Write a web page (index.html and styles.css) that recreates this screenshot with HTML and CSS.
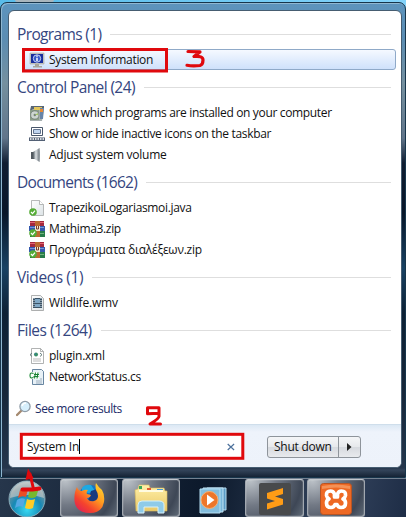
FILE: index.html
```html
<!DOCTYPE html>
<html lang="en">
<head>
<meta charset="utf-8">
<title>Start menu search</title>
<link rel="stylesheet" href="styles.css">
</head>
<body>
<svg width="0" height="0" class="defs">
  <defs>
    <linearGradient id="page" x2="1" y2="1"><stop stop-color="#fff"/><stop offset="1" stop-color="#dce3e6"/></linearGradient>
    <linearGradient id="metal" x2="1"><stop stop-color="#4f5960"/><stop offset=".45" stop-color="#dce1e4"/><stop offset="1" stop-color="#6c757c"/></linearGradient>
    <radialGradient id="orb" cx=".5" cy=".8" r=".8"><stop stop-color="#38d9f2"/><stop offset=".5" stop-color="#1789b5"/><stop offset=".78" stop-color="#69909f"/><stop offset="1" stop-color="#b9cbd1"/></radialGradient>
    <linearGradient id="fox" x1="1" x2=".2" y2="1"><stop stop-color="#ffe333"/><stop offset=".45" stop-color="#ff9820"/><stop offset=".75" stop-color="#f5432d"/><stop offset="1" stop-color="#df2255"/></linearGradient>
    <linearGradient id="folder" y2="1" x2="0"><stop stop-color="#fff0a8"/><stop offset="1" stop-color="#eac967"/></linearGradient>
    <symbol id="check" viewBox="0 0 8 8"><circle cx="4" cy="4" r="3.8" fill="#55ac36"/><path d="M2 4l1.5 1.6L6 2.6" fill="none" stroke="#fff" stroke-width="1.2"/></symbol>
    <symbol id="rar" viewBox="0 0 16 16">
      <path d="M1 0h14v5H1z" fill="#a3283e"/><path d="M1 1h14v1H1z" fill="#e36773"/>
      <path d="M0 5h16v5H0z" fill="#3458ae"/><path d="M1 6h14v1H1z" fill="#7896d5"/>
      <path d="M1 10h15v6H1z" fill="#287c49"/><path d="M1 12h14v1H1z" fill="#70b47d"/>
      <path d="M6 0h5v16H6z" fill="#bb6a30"/><path d="M6 5h5v5H6z" fill="#f5e7d0"/><path d="M7.5 5v3h2V5" fill="none" stroke="#743c2e"/>
      <use href="#check" x="0" y="8" width="8" height="8"/>
    </symbol>
  </defs>
</svg>
<div class="desktop">
  <div class="tab"></div>
  <div class="frame">
    <main class="menu">
      <div class="results">
        <h2 class="h-programs">Programs (1)</h2>
        <div class="row selected">
          <svg class="icon" viewBox="0 0 16 16"><path d="M1 1h14v11H1z" fill="#c9c9c3" stroke="#a6a59d" stroke-width=".6"/><path d="M2 2h12v9H2z" fill="#182d9e"/><circle cx="8" cy="6.5" r="3.7" fill="#3759ca" stroke="#e7efff" stroke-width=".8"/><path d="M8 5.8v3.3M8 3.5v1.3" stroke="#fff" stroke-width="1.5"/><path d="M6 12h4v2h3v1.5H4V14h2z" fill="#a8a69c"/></svg>
          <span class="name tight">System Information</span>
        </div>
        <h2 class="h-control">Control Panel (24)</h2>
        <div class="row">
          <svg class="icon" viewBox="0 0 16 16"><path d="M3 1h12v3l-2 12H1V5z" fill="#a7b0b0"/><path d="M2 1h13v3H4L1 6z" fill="#586575"/><path d="M5 2h8v3H5z" fill="#e3c65b"/><path d="M11 3h4l-1 11h-3z" fill="#6784a8"/><path d="M11 4h3v3h-3z" fill="#e98a32"/><path d="M1 5h9v10H1z" fill="#8c9d88"/><circle cx="5.8" cy="10" r="4.1" fill="#ced6d1" stroke="#65716c" stroke-width=".6"/><circle cx="5.8" cy="10" r="1.2" fill="#758476"/><path d="M6 10l3-2v2z" fill="#a1c65e"/></svg>
          <span class="name tight">Show which programs are installed on your computer</span>
        </div>
        <div class="row">
          <svg class="icon" viewBox="0 0 16 16"><path d="M2.5 1.5h11v8h-11z" fill="#fff" stroke="#48566a"/><path d="M4.5 3.5h7v4h-7z" fill="#c0d5f0" stroke="#647590"/><path d="M0 11h16v4H0z" fill="#536075"/><path d="M1 13h14" stroke="#fff" stroke-width="1.5" stroke-dasharray="1.5 1"/><path d="M0 11.5h16" stroke="#a0a7b2"/></svg>
          <span class="name taskbar-text">Show or hide inactive icons on the taskbar</span>
        </div>
        <div class="row">
          <svg class="icon" viewBox="0 0 16 16"><path d="M2 5h4v7H2z" fill="#525960"/><path d="M4 5l6.500-4v14L4 11z" fill="url(#metal)"/><path d="M10 1q2 7 0 14" fill="#8e979d"/></svg>
          <span class="name">Adjust system volume</span>
        </div>
        <h2 class="h-documents">Documents (1662)</h2>
        <div class="row">
          <svg class="icon" viewBox="0 0 16 16"><path d="M2.5.5h8l4 4v11h-12z" fill="url(#page)" stroke="#a5a7a7" stroke-width=".8"/><path d="M10.5.5v4h4" fill="#fff" stroke="#a5a7a7" stroke-width=".8"/><use href="#check" y="8" width="8" height="8"/></svg>
          <span class="name tight">TrapezikoiLogariasmoi.java</span>
        </div>
        <div class="row"><svg class="icon"><use href="#rar"/></svg><span class="name tight">Mathima3.zip</span></div>
        <div class="row"><svg class="icon"><use href="#rar"/></svg><span class="name greek">Προγράμματα διαλέξεων.zip</span></div>
        <h2 class="h-videos">Videos (1)</h2>
        <div class="row">
          <svg class="icon" viewBox="0 0 16 16"><path d="M2.5.5h9l3 3v12h-12z" fill="url(#page)" stroke="#9a9c9c" stroke-width=".8"/><path d="M4 3h9v10H4z" fill="#3c5366"/><path d="M6 4h5v4H6zM6 9h5v3H6z" fill="#80a8c5"/><path d="M5 3v10M12 3v10" stroke="#d3e0e6" stroke-dasharray="1 1"/></svg>
          <span class="name loose">Wildlife.wmv</span>
        </div>
        <h2 class="h-files">Files (1264)</h2>
        <div class="row">
          <svg class="icon" viewBox="0 0 16 16"><path d="M2.5.5h9l3 3v12h-12z" fill="#fff" stroke="#9d9f9f" stroke-width=".8"/><path d="M11.5.5v3h3" fill="none" stroke="#9d9f9f" stroke-width=".8"/><path d="M3 5L1 6.7 3 8.5M11 5l2 1.7-2 1.8" fill="none" stroke="#657d7d"/><circle cx="7" cy="6.5" r="2" fill="#388f67"/><path d="M6 5.5h1v1H6z" fill="#356fbd"/><path d="M4 11h8M4 13h8" stroke="#bbb"/></svg>
          <span class="name">plugin.xml</span>
        </div>
        <div class="row">
          <svg class="icon" viewBox="0 0 16 16"><path d="M3.5.5h9l2 2v13h-11z" fill="#e8f1f7" stroke="#587896" stroke-width=".9"/><path d="M7 12h6M7 14h6M11 10h2" stroke="#9daebd"/><path d="M0 3h10v7H0z" fill="#f8fff8"/><path d="M4.5 4.5Q1 3 1 6.5t3.5 2M6.5 3.5l-1 6M9 3.5l-1 6M5 5.5h5M4.5 7.5h5" fill="none" stroke="#168133" stroke-width="1.1"/></svg>
          <span class="name tight">NetworkStatus.cs</span>
        </div>
        <div class="more">
          <svg width="16" height="18" viewBox="0 0 16 18"><path d="M6 10L1 15" stroke="#a58a70" stroke-width="2.4" stroke-linecap="round"/><circle cx="9" cy="6.5" r="5.1" fill="#d6effc" stroke="#8f9ba6" stroke-width="1.3"/><path d="M6 6q1-3 4-3" stroke="#fff" stroke-width="1.5" fill="none"/></svg>
          <span class="name more-text">See more results</span>
        </div>
      </div>
      <footer class="footer">
        <div class="search"><span class="name">System In</span><i class="caret"></i><svg class="clear" width="8" height="8" viewBox="0 0 8 8"><path d="M.7 1l6.4 6M7.1 1L.7 7" stroke="#4d719c" stroke-width="1.2"/></svg></div>
        <div class="shutdown"><span class="label name">Shut down</span><span class="arrow"><svg width="5" height="8" viewBox="0 0 5 8"><path d="M0 0l4.5 4L0 8z" fill="#222"/></svg></span></div>
      </footer>
    </main>
  </div>
  <nav class="taskbar">
    <div class="start"><svg width="40" height="37" viewBox="0 0 40 37"><circle cx="19" cy="19" r="18" fill="url(#orb)" stroke="#a0bdc6" stroke-width=".8"/><path d="M2 18a17 16 0 0 1 34 0q-16-6-34 0z" fill="#dbd5d0" opacity=".55"/><path d="M12 10q4-3 8-1l-2 8q-4-2-8 1z" fill="#e94e25"/><path d="M22 9q4 2 9-1l-3 9q-4 2-8 0z" fill="#77b92f"/><path d="M9 20q4-3 8-1l-2 8q-4-2-8 1z" fill="#54a8e4"/><path d="M19 19q4 2 8 0l-2 9q-4 2-8 0z" fill="#ffcc26"/></svg></div>
    <div class="task b1"><svg width="31" height="31" viewBox="0 0 31 31"><circle cx="16" cy="13" r="11" fill="#1674c5"/><path d="M8 5q3-4 9-3l4 6-6 2-7-1z" fill="#1ea9e3"/><path d="M17 8l6-2 2 8-4 5-7-1z" fill="#163b80"/><path d="M3 4q1 4 5 4 3-2 6-1-2 2-1 4l4 1q-1 3-4 3 2 4 7 3 4-1 4-5 0-3-2-6-1-4 0-7 3 5 6 7 3 5 2 12-2 11-14 11Q2 30 .5 18 0 9 3 4z" fill="url(#fox)"/></svg></div>
    <div class="task b2"><svg width="34" height="31" viewBox="0 0 34 31"><path d="M1 6l3-1 1-4h10l1 3h14l1 3h2v20H2z" fill="url(#folder)" stroke="#d7b95b" stroke-width=".6"/><path d="M5 2h3v3H5z" fill="#38a95c"/><path d="M13 4h4v3h-4z" fill="#e35a32"/><path d="M23 5h6v2h-6z" fill="#479bd8"/><path d="M5 6h24v2H5z" fill="#fffbe0"/><path d="M4 29V21q0-4 4-4h17q5 0 5 4v8h-6v-6H10v6z" fill="#8fcbe9" stroke="#d6f1fb"/></svg></div>
    <div class="task plain"><svg width="28" height="27" viewBox="0 0 28 27"><path d="M8 1h19v22H8z" fill="#5b9bc5" stroke="#b6dcf0"/><path d="M4 1h20v24H4z" fill="#77b5d9" stroke="#c3e4f4"/><path d="M1 2h20v24H1z" fill="#83bddd" stroke="#b6dff2"/><circle cx="10.5" cy="13" r="8.5" fill="#ed762a" stroke="#f5b073"/><path d="M8 7.5l7.5 5.5L8 18.5z" fill="#fff"/></svg></div>
    <div class="task b3"><svg width="32" height="32" viewBox="0 0 32 32"><rect width="32" height="32" rx="2" fill="#484a4c"/><path d="M24 5v6l-8 2.500 8 2.500v5.500L8 26.500v-6l8-2.500-8-2.500V10z" fill="#ff9c16"/></svg></div>
    <div class="task b4"><svg width="32" height="32" viewBox="0 0 32 32"><rect x=".5" y=".5" width="31" height="31" rx="3" fill="#ee6924" stroke="#b75424"/><path d="M2 3q14-3 28 0v3Q16 3 2 6z" fill="#f7a26c" opacity=".7"/><path d="M10.500 8Q6 8 6.500 12.500 7 15 9 16 6.500 17 6.500 20 6.500 24.500 11 24.500q3 0 4-3h2q1 3 4 3 4.500 0 4.500-4.500 0-3-2.500-4 2-1 2.500-3.500Q26 8 21.500 8 18.500 8 17.500 11v3h-3v-3Q13.500 8 10.500 8z" fill="none" stroke="#fff" stroke-width="3.700" stroke-linejoin="round"/></svg></div>
  </nav>
  <svg class="marks" viewBox="0 0 406 517"><g fill="none" stroke="#e0090d" stroke-linecap="round" stroke-linejoin="round"><rect x="23.5" y="49.5" width="143" height="21.5" stroke-width="3" stroke-linejoin="miter"/><rect x="21.3" y="434.3" width="221.5" height="24" stroke-width="3" stroke-linejoin="miter"/><path d="M188 51.5l12 .4-6 4.6q9-1 9 3.5t-3 5.5q-7 1-13-.2" stroke-width="3.2"/><path d="M159 414v-6.300h-11.500v6l11.500-.4v3.200q0 2-9 7.500h10.500" stroke-width="3"/><path d="M30 474l3.500 15" stroke-width="3"/><path d="M22.500 489.5h10l7-1" stroke-width="4"/></g><path d="M28 468.500l5.500 9.500-8 2z" fill="#e0090d"/></svg>
</div>
</body>
</html>
```
FILE: styles.css
```css
* { box-sizing: border-box; }
body { margin: 0; font: 12px/21px "Open Sans", "Noto Sans", sans-serif; color: #111; overflow: hidden; }
.defs { position: absolute; }
.desktop { position: relative; width: 406px; height: 517px; display: flex; flex-direction: column; padding-top: 2px; overflow: hidden; background: linear-gradient(90deg, #59bce9, #83d3fa); }
.tab { position: absolute; left: 15px; top: 0; width: 39px; height: 2px; background: #a9b6bd; border-radius: 0 0 3px 3px; }
.frame { height: 476px; padding: 7px 2px 0 7px; border: 1px solid #17354b; border-radius: 7px 7px 0 0; box-shadow: inset 1px 1px #8fb7d1; background: linear-gradient(#5d94bd 0, #5b8db3 35px, #75909f 80px, #61758a 135px, #101d31 160px, #081629 210px, #194263 265px, #0d2135 310px, #17273a 390px, #25364c 465px, #33445a 467px, #152335 474px); }
.menu { width: 394px; height: 458px; border: 1px solid #465d71; border-radius: 6px; background: #fff; overflow: hidden; display: flex; flex-direction: column; }
.results { flex: none; height: 413px; padding: 6px 6px 0 8px; }
h2 { display: flex; align-items: center; gap: 9px; margin: 0; height: 32px; padding: 2px 4px 0 0; font-size: 15.5px; line-height: 30px; font-weight: 400; color: #35467f; white-space: nowrap; }
h2::after { content: ""; height: 1px; flex: 1; background: #dedede; }
.h-programs { letter-spacing: -.64px; }
.h-control { letter-spacing: -.6px; }
.h-documents { letter-spacing: -.72px; }
.h-videos { letter-spacing: -.4px; }
.h-files { letter-spacing: -.5px; }
.row { display: flex; align-items: center; gap: 4px; height: 21px; padding-left: 12px; white-space: nowrap; }
.selected { margin: 0 -1px 0 5px; padding-left: 7px; border: 1px solid #8fa9c8; border-radius: 3px; background: linear-gradient(#f5f9ff, #cfe1fb); }
.selected .icon { margin-left: -1px; }
.icon { width: 16px; height: 16px; flex: none; }
.name { letter-spacing: -.25px; }
.tight { letter-spacing: -.34px; }
.taskbar-text { letter-spacing: -.32px; }
.greek { letter-spacing: -.26px; }
.loose { letter-spacing: -.17px; }
.more { display: flex; align-items: center; gap: 3px; height: 21px; margin-top: 11px; color: #1c2c68; }
.more svg { margin-left: -1px; }
.more-text { letter-spacing: -.45px; }
.footer { flex: 1; display: flex; align-items: center; gap: 23px; padding-left: 10px; background: linear-gradient(#dce8f4, #eef3fb 7px, #edf2fa); border-top: 1px solid #cfdeeb; }
.search { width: 225px; height: 26px; margin-top: 1px; display: flex; align-items: center; padding: 0 9px 0 8px; background: #fff; }
.caret { width: 1px; height: 15px; background: #000; }
.clear { margin-left: auto; }
.shutdown { display: flex; width: 94px; height: 22px; margin-top: 2px; border: 1px solid #8e949b; border-radius: 3px; background: linear-gradient(#f5f6f8, #e7e9ec 48%, #d6d9de 50%, #e8eaed); }
.label { width: 71px; height: 20px; line-height: 19px; padding-left: 6px; border-right: 1px solid #8e949b; white-space: nowrap; }
.arrow { flex: 1; display: flex; align-items: center; justify-content: center; }
.taskbar { height: 39px; display: flex; border-top: 1px solid #748191; background: linear-gradient(100deg, #26364b, #0c192b 50%, #34445e 82%, #1e2d46); }
.start { width: 60px; padding-left: 8px; padding-top: 1px; }
.task { height: 38px; display: flex; flex: none; align-items: flex-start; justify-content: center; border: 1px solid #a2a8b0; border-top-color: #c2c7cc; border-radius: 3px; background: radial-gradient(circle at 8% 0, #bdc3c9, #727985 40%, #3e4756 80%, #606b78); box-shadow: inset 0 0 1px #fff; padding-top: 3px; }
.task svg { flex: none; }
.b1 { width: 58px; margin-right: 4px; }
.b2 { width: 58px; padding-top: 4px; }
.plain { width: 65px; border: 0; background: none; box-shadow: none; padding-top: 8px; }
.b3 { width: 59px; margin-right: 3px; }
.b4 { width: 58px; }
.marks { position: absolute; inset: 0; width: 406px; height: 517px; }
```
